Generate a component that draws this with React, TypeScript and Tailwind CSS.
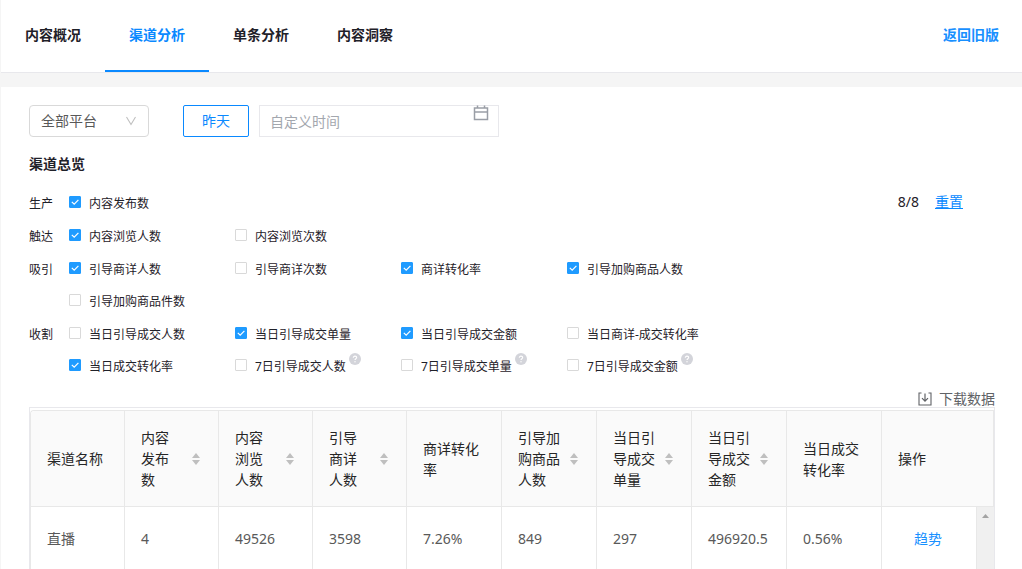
import { useState } from "react";

type Metric = {
  label: string;
  on?: boolean;
  hint?: boolean;
};

type Group = {
  name: string;
  items: Metric[];
};

const TABS = ["内容概况", "渠道分析", "单条分析", "内容洞察"];

const GROUPS: Group[] = [
  { name: "生产", items: [{ label: "内容发布数", on: true }] },
  { name: "触达", items: [{ label: "内容浏览人数", on: true }, { label: "内容浏览次数" }] },
  {
    name: "吸引",
    items: [
      { label: "引导商详人数", on: true },
      { label: "引导商详次数" },
      { label: "商详转化率", on: true },
      { label: "引导加购商品人数", on: true },
      { label: "引导加购商品件数" },
    ],
  },
  {
    name: "收割",
    items: [
      { label: "当日引导成交人数" },
      { label: "当日引导成交单量", on: true },
      { label: "当日引导成交金额", on: true },
      { label: "当日商详-成交转化率" },
      { label: "当日成交转化率", on: true },
      { label: "7日引导成交人数", hint: true },
      { label: "7日引导成交单量", hint: true },
      { label: "7日引导成交金额", hint: true },
    ],
  },
];

// titles carry their own line breaks so the sorter never changes the wrapping
const COLUMNS = [
  { title: "渠道名称", width: "w-[94px]" },
  { title: "内容\n发布\n数", width: "w-[94px]", sort: true },
  { title: "内容\n浏览\n人数", width: "w-[94px]", sort: true },
  { title: "引导\n商详\n人数", width: "w-[94px]", sort: true },
  { title: "商详转化\n率", width: "w-[95px]" },
  { title: "引导加\n购商品\n人数", width: "w-[95px]", sort: true },
  { title: "当日引\n导成交\n单量", width: "w-[95px]", sort: true },
  { title: "当日引\n导成交\n金额", width: "w-[95px]", sort: true },
  { title: "当日成交\n转化率", width: "w-[95px]" },
  { title: "操作", width: "w-[112px]" },
];

const ROWS = [["直播", "4", "49526", "3598", "7.26%", "849", "297", "496920.5", "0.56%"]];

function initialChecked() {
  return GROUPS.flatMap((g) => g.items)
    .filter((m) => m.on)
    .map((m) => m.label);
}

function CalendarIcon() {
  return (
    <svg className="pointer-events-none absolute top-0 right-[10px] h-4 w-4" viewBox="0 0 16 16" fill="none" stroke="#9a9ea6">
      <path d="M1.5 3h13v11.5h-13zM1.5 7h13M4.5 0.5v3M11.5 0.5v3" strokeWidth="1.5" />
    </svg>
  );
}

function DownloadIcon() {
  return (
    <svg className="h-[14px] w-[14px]" viewBox="0 0 14 14" fill="none" stroke="#606266">
      <path d="M3.5 1H1v12h12V1h-2.5" strokeWidth="1.1" />
      <path d="M7 1.5V9M4 6.2l3 3 3-3" strokeWidth="1.2" />
    </svg>
  );
}

function Sorter() {
  return (
    <button type="button" aria-label="排序" className="mr-px shrink-0">
      <svg className="h-3 w-[10px]" viewBox="0 0 10 12" fill="#bfbfbf">
        <path d="M5 0 9 5H1zM5 12 9 7H1z" />
      </svg>
    </button>
  );
}

function HintIcon() {
  return (
    <svg className="mt-[2px] ml-[3px] h-3 w-3 shrink-0" viewBox="0 0 12 12" fill="none">
      <circle cx="6" cy="6" r="6" fill="#d3d4da" />
      <path d="M4.3 4.8c0-1 .7-1.7 1.7-1.7s1.7.6 1.7 1.5c0 1.1-1.7 1.2-1.7 2.4" stroke="#fff" strokeWidth="1.1" />
      <circle cx="6" cy="8.8" r=".7" fill="#fff" />
    </svg>
  );
}

export default function App() {
  const [tab, setTab] = useState("渠道分析");
  const [checked, setChecked] = useState<string[]>(initialChecked);

  function toggle(label: string) {
    setChecked((c) => (c.includes(label) ? c.filter((l) => l !== label) : [...c, label]));
  }

  return (
    <div className="flex h-screen flex-col overflow-hidden border-l border-[#f5f5f5] bg-[#f5f5f5] font-['Noto_Sans','Noto_Sans_CJK_SC',sans-serif] text-sm text-[#1f2129]">
      <header className="flex shrink-0 items-stretch justify-between border-b border-[#e8e8ec] bg-white">
        <nav className="flex">
          {TABS.map((t) => (
            <button
              key={t}
              onClick={() => setTab(t)}
              className={`h-[72px] border-b-2 px-6 font-bold ${
                tab === t ? "border-[#0a89ff] text-[#0a89ff]" : "border-transparent text-[#1f2129]"
              }`}
            >
              {t}
            </button>
          ))}
        </nav>
        <a href="#" className="self-center pr-[23px] pb-[2px] font-bold text-[#1890ff]">
          返回旧版
        </a>
      </header>

      <main className="mt-[14px] flex min-h-0 flex-1 flex-col bg-white pt-[18px] pr-[27px] pl-7">
        <div className="flex shrink-0 items-center">
          <div className="relative">
            <select
              aria-label="平台"
              className="h-8 w-[120px] appearance-none rounded border border-[#d9d9d9] bg-white pl-[11px] text-[#595959] outline-none"
            >
              <option>全部平台</option>
            </select>
            <svg className="pointer-events-none absolute top-[11px] right-3 h-[10px] w-3" viewBox="0 0 12 10" fill="none" stroke="#bfbfbf">
              <path d="M1.5 1 6 8.5 10.5 1" strokeWidth="1.1" />
            </svg>
          </div>
          <button className="ml-[34px] h-8 w-[66px] rounded-xs border border-[#0a89ff] text-[#0a89ff]">昨天</button>
          <div className="relative ml-[10px]">
            <input
              aria-label="自定义时间"
              placeholder="自定义时间"
              className="h-8 w-60 border border-[#e8e8ec] px-[10px] outline-none placeholder:text-[#a3a7ae]"
            />
            <CalendarIcon />
          </div>
        </div>

        <h2 className="mt-[17px] mb-[14px] shrink-0 text-sm leading-5 font-bold">渠道总览</h2>

        <div className="flex shrink-0 items-start justify-between">
          <div className="flex max-w-[704px] flex-1 flex-col gap-px">
            {GROUPS.map((g) => (
              <div key={g.name} className="flex text-xs leading-8">
                <span className="w-10 shrink-0">{g.name}</span>
                <div className="grid flex-1 grid-cols-[repeat(auto-fill,166px)]">
                  {g.items.map((m) => (
                    <div key={m.label} className="flex h-8 items-start">
                      <label className="flex items-start gap-2">
                        <span className="relative mt-2 flex h-3 w-3">
                          <input
                            type="checkbox"
                            checked={checked.includes(m.label)}
                            onChange={() => toggle(m.label)}
                            className="peer h-3 w-3 appearance-none rounded-[1px] border border-[#d9d9d9] bg-white checked:border-[#1f9bff] checked:bg-[#1f9bff]"
                          />
                          <svg
                            className="pointer-events-none absolute inset-0 hidden h-3 w-3 peer-checked:block"
                            viewBox="0 0 12 12"
                            fill="none"
                            stroke="#fff"
                          >
                            <path d="M2.8 5.8 5.2 8.2 9.4 3.9" strokeWidth="1.2" />
                          </svg>
                        </span>
                        {m.label}
                      </label>
                      {m.hint ? <HintIcon /> : null}
                    </div>
                  ))}
                </div>
              </div>
            ))}
          </div>
          <div className="flex gap-4 pr-8 leading-7">
            <span>{checked.length}/8</span>
            <button onClick={() => setChecked(initialChecked())} className="text-[#0a89ff] underline">
              重置
            </button>
          </div>
        </div>

        <button className="mt-2 flex shrink-0 items-center gap-[7px] self-end leading-4 text-[#606266]">
          <DownloadIcon />
          下载数据
        </button>

        <div className="relative min-h-0 flex-1 border-x border-t border-[#e8e8ec] pt-[2px]">
          <table className="w-full table-fixed border-separate border-spacing-0 rounded-tl border-t border-l border-[#e8e8e8] text-left">
            <thead>
              <tr>
                {COLUMNS.map((c) => (
                  <th
                    key={c.title}
                    className={`${c.width} border-r border-b border-[#e8e8e8] bg-[#fafafa] px-4 py-4 leading-[21px] font-normal text-[#262626] first:rounded-tl`}
                  >
                    <div className="flex items-center justify-between">
                      <span className="whitespace-pre">{c.title}</span>
                      {c.sort ? <Sorter /> : null}
                    </div>
                  </th>
                ))}
              </tr>
            </thead>
            <tbody>
              {ROWS.map((row) => (
                <tr key={row[0]} className="text-[#595959]">
                  {row.map((v, i) => (
                    <td key={i} className="h-16 border-r border-b border-[#e8e8e8] px-4">
                      {v}
                    </td>
                  ))}
                  <td className="border-b border-[#e8e8e8] pr-5 text-center">
                    <a href="#" className="text-[#1890ff]">
                      趋势
                    </a>
                  </td>
                </tr>
              ))}
            </tbody>
          </table>
          <div className="absolute top-[99px] right-0 bottom-0 w-[18px] border-l border-[#e8e8e8] bg-[#f0f0f0]">
            <svg className="mx-auto mt-[7px] h-1 w-[7px]" viewBox="0 0 7 4" fill="#a3a3a3">
              <path d="M3.5 0 7 4H0z" />
            </svg>
          </div>
        </div>
      </main>
    </div>
  );
}
